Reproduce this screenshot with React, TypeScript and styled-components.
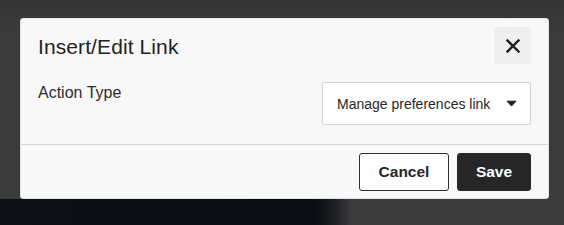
import React from "react";
import styled, { createGlobalStyle } from "styled-components";

const Global = createGlobalStyle`
  html, body { margin: 0; padding: 0; }
  body {
    background: #3a3a3b;
    font-family: "Liberation Sans", Arial, Helvetica, sans-serif;
    width: 564px;
    height: 225px;
    overflow: hidden;
  }
`;

const Backdrop = styled.div`
  display: flex;
  flex-direction: column;
  padding: 18px 0 0 20px;
  height: 225px;
  box-sizing: border-box;
  background: linear-gradient(180deg, #353536 0px, #3b3b3c 40px, #3a3a3b 100%);
`;

const Dialog = styled.div`
  width: 529px;
  height: 181px;
  box-sizing: border-box;
  background: #f8f8f8;
  border-radius: 3px;
  border: 1px solid #e2e2e2;
  display: flex;
  flex-direction: column;
`;

const Header = styled.div`
  display: flex;
  align-items: flex-start;
  justify-content: space-between;
  padding: 8px 17px 0 17px;
`;

const Title = styled.h2`
  margin: 0;
  padding-top: 8px;
  font-size: 21px;
  font-weight: 400;
  line-height: 24px;
  color: #232323;
  letter-spacing: 0.1px;
`;

const CloseButton = styled.button`
  width: 37px;
  height: 37px;
  border: none;
  border-radius: 2px;
  background: #efefef;
  display: flex;
  align-items: center;
  justify-content: center;
  padding: 0;
  cursor: pointer;
`;

const Body = styled.div`
  display: flex;
  justify-content: space-between;
  align-items: flex-start;
  padding: 18px 17px 0 17px;
  height: 80px;
  box-sizing: border-box;
`;

const Label = styled.label`
  font-size: 16px;
  line-height: 20px;
  color: #2c2c2c;
  margin-top: 1px;
`;

const Select = styled.div`
  width: 209px;
  height: 43px;
  box-sizing: border-box;
  background: #ffffff;
  border: 1px solid #d3d3d3;
  border-radius: 2px;
  display: flex;
  align-items: center;
  justify-content: space-between;
  padding: 0 13px 0 14px;
  font-size: 14px;
  color: #262626;
`;

const Divider = styled.div`
  height: 1px;
  background: #d4d4d4;
`;

const Footer = styled.div`
  display: flex;
  justify-content: flex-end;
  gap: 8px;
  padding: 8px 17px 0 17px;
`;

const Button = styled.button<{ $primary?: boolean }>`
  height: 38px;
  box-sizing: border-box;
  border-radius: 3px;
  font-family: "Liberation Sans", Arial, Helvetica, sans-serif;
  font-size: 15.5px;
  font-weight: 700;
  cursor: pointer;
  width: ${(p) => (p.$primary ? "74px" : "90px")};
  border: 1px solid ${(p) => (p.$primary ? "#262626" : "#2e2e2e")};
  background: ${(p) => (p.$primary ? "#262626" : "#ffffff")};
  color: ${(p) => (p.$primary ? "#ffffff" : "#262626")};
`;

const Shadow = styled.div`
  width: 350px;
  height: 26px;
  margin-left: -20px;
  background: linear-gradient(90deg, #0c0f14 0%, #0a0d12 90%, #1e2024 96%, rgba(58, 58, 59, 0) 100%);
`;

export default function App() {
  return (
    <>
      <Global />
      <Backdrop>
        <Dialog>
          <Header>
            <Title>Insert/Edit Link</Title>
            <CloseButton aria-label="Close">
              <svg width="14" height="14" viewBox="0 0 14 14">
                <path d="M1.5 1.5 L12.5 12.5 M12.5 1.5 L1.5 12.5" stroke="#1e1e1e" strokeWidth="2.4" strokeLinecap="square" />
              </svg>
            </CloseButton>
          </Header>
          <Body>
            <Label>Action Type</Label>
            <Select>
              <span>Manage preferences link</span>
              <svg width="11" height="7" viewBox="0 0 11 7">
                <path d="M1 1.2 H10 L5.5 6 Z" fill="#1e1e1e" stroke="#1e1e1e" strokeWidth="1" strokeLinejoin="round" />
              </svg>
            </Select>
          </Body>
          <Divider />
          <Footer>
            <Button>Cancel</Button>
            <Button $primary>Save</Button>
          </Footer>
        </Dialog>
        <Shadow />
      </Backdrop>
    </>
  );
}
